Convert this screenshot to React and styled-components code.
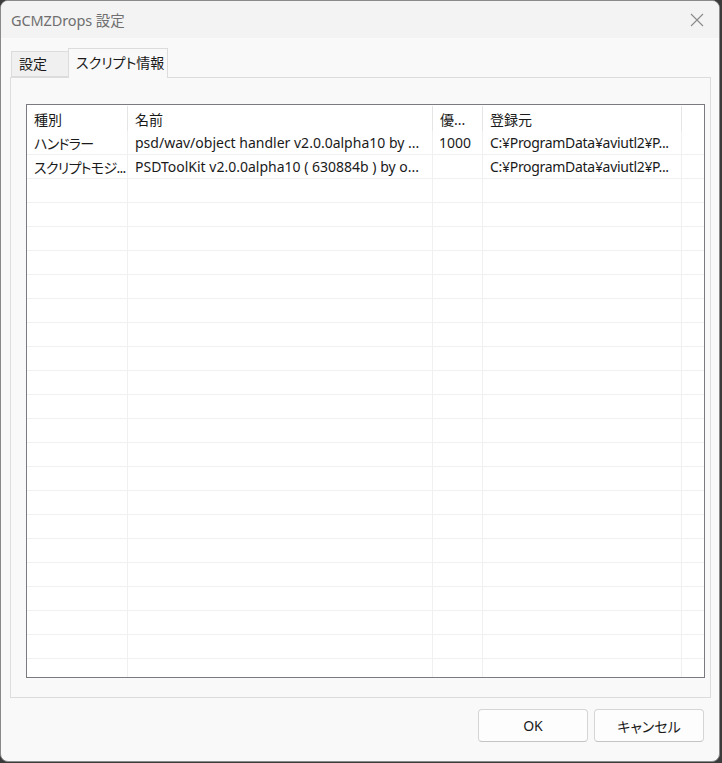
import React from "react";
import styled, { createGlobalStyle } from "styled-components";

const Global = createGlobalStyle`
  html, body { margin: 0; padding: 0; }
  body {
    background: #3b3b3b;
    font-family: "Noto Sans", "Noto Sans CJK JP", sans-serif;
    font-feature-settings: "palt";
    width: 722px; height: 763px; overflow: hidden;
  }
`;

const Window = styled.div`
  box-sizing: border-box;
  width: 720px;
  height: 762px;
  background: #f9f9f9;
  border: 1px solid #8a8a8a;
  border-radius: 8px;
  overflow: hidden;
  display: flex;
  flex-direction: column;
`;

const TitleBar = styled.div`
  height: 37px;
  flex: none;
  background: #f3f3f3;
  display: flex;
  align-items: center;
  justify-content: space-between;
  padding: 0 10px 0 10px;
`;

const Title = styled.div`
  font-size: 14.5px;
  color: #6f6f6f;
  letter-spacing: -0.1px;
`;

const CloseBtn = styled.div`
  width: 16px;
  height: 16px;
  margin-right: 4px;
  display: flex;
  align-items: center;
  justify-content: center;
`;

const Body = styled.div`
  flex: 1;
  display: flex;
  flex-direction: column;
  padding: 10px 8px 0 8px;
`;

const TabStrip = styled.div`
  display: flex;
  align-items: flex-end;
  height: 29px;
  padding-left: 2px;
  position: relative;
  z-index: 1;
`;

const Tab = styled.div`
  box-sizing: border-box;
  height: ${(p) => (p.$active ? "30px" : "26px")};
  margin-bottom: ${(p) => (p.$active ? "-1px" : "0")};
  margin-left: ${(p) => (p.$active ? "-1px" : "0")};
  padding: 0 0 ${(p) => (p.$active ? "3px" : "2px")} 7px;
  background: ${(p) => (p.$active ? "#f9f9f9" : "#f0f0f0")};
  border: 1px solid #dcdcdc;
  border-bottom: ${(p) => (p.$active ? "none" : "1px solid #dcdcdc")};
  display: flex;
  align-items: center;
  font-size: 14px;
  color: #1a1a1a;
  white-space: nowrap;
  width: ${(p) => p.$w}px;
`;

const Panel = styled.div`
  box-sizing: border-box;
  height: 621px;
  margin-left: 1px;
  border: 1px solid #dcdcdc;
  background: #f9f9f9;
  padding: 26px 5px 19px 15px;
  display: flex;
`;

const List = styled.div`
  flex: 1;
  border: 1px solid #7a7a80;
  background: #ffffff;
  overflow: hidden;
  display: flex;
  flex-direction: column;
`;

const cols = "101px 305px 50px 199px 1fr";

const HeaderRow = styled.div`
  display: grid;
  grid-template-columns: ${cols};
  height: 26px;
  flex: none;
`;

const HeaderCell = styled.div`
  display: flex;
  align-items: center;
  padding-left: 7px;
  font-size: 14px;
  color: #1a1a1a;
  border-right: ${(p) => (p.$last ? "none" : "1px solid #e5e5e5")};
  margin-top: 1px;
  white-space: nowrap;
  overflow: hidden;
`;

const Row = styled.div`
  display: grid;
  grid-template-columns: ${cols};
  height: 24px;
  flex: none;
  box-sizing: border-box;
  border-bottom: 1px solid #f0f0f0;
`;

const Cell = styled.div`
  display: flex;
  align-items: center;
  padding-left: ${(p) => (p.$num ? "6px" : "7px")};
  font-size: 14px;
  color: #1a1a1a;
  border-right: ${(p) => (p.$last ? "none" : "1px solid #f0f0f0")};
  white-space: nowrap;
  overflow: hidden;
  letter-spacing: ${(p) => p.$ls || "0"};
`;

const Footer = styled.div`
  display: flex;
  justify-content: flex-end;
  gap: 6px;
  padding: 11px 7px 0 0;
`;

const Button = styled.button`
  box-sizing: border-box;
  width: 110px;
  height: 33px;
  background: #fdfdfd;
  border: 1px solid #d5d5d5;
  border-bottom-color: #c4c4c4;
  border-radius: 4px;
  font-family: "Noto Sans", "Noto Sans CJK JP", sans-serif;
  font-feature-settings: "palt";
  font-size: 14px;
  color: #1a1a1a;
  padding: 0;
`;

const rows = [
  ["ハンドラー", "psd/wav/object handler v2.0.0alpha10 by ...", "1000", "C:¥ProgramData¥aviutl2¥P..."],
  ["スクリプトモジ...", "PSDToolKit v2.0.0alpha10 ( 630884b ) by o...", "", "C:¥ProgramData¥aviutl2¥P..."],
];

export default function App() {
  const empty = Array.from({ length: 22 });
  return (
    <>
      <Global />
      <Window>
        <TitleBar>
          <Title>GCMZDrops 設定</Title>
          <CloseBtn>
            <svg width="14" height="14" viewBox="0 0 14 14">
              <path d="M1 1 L13 13 M13 1 L1 13" stroke="#8a8a8a" strokeWidth="1.1" fill="none" />
            </svg>
          </CloseBtn>
        </TitleBar>
        <Body>
          <TabStrip>
            <Tab $w={58}>設定</Tab>
            <Tab $active $w={100}>スクリプト情報</Tab>
          </TabStrip>
          <Panel>
            <List>
              <HeaderRow>
                <HeaderCell>種別</HeaderCell>
                <HeaderCell>名前</HeaderCell>
                <HeaderCell>優...</HeaderCell>
                <HeaderCell>登録元</HeaderCell>
                <HeaderCell $last />
              </HeaderRow>
              {rows.map((r, i) => (
                <Row key={i}>
                  <Cell $ls="-0.7px">{r[0]}</Cell>
                  <Cell>{r[1]}</Cell>
                  <Cell $num>{r[2]}</Cell>
                  <Cell $ls="-0.3px">{r[3]}</Cell>
                  <Cell $last />
                </Row>
              ))}
              {empty.map((_, i) => (
                <Row key={"e" + i}>
                  <Cell />
                  <Cell />
                  <Cell />
                  <Cell />
                  <Cell $last />
                </Row>
              ))}
            </List>
          </Panel>
          <Footer>
            <Button>OK</Button>
            <Button>キャンセル</Button>
          </Footer>
        </Body>
      </Window>
    </>
  );
}
